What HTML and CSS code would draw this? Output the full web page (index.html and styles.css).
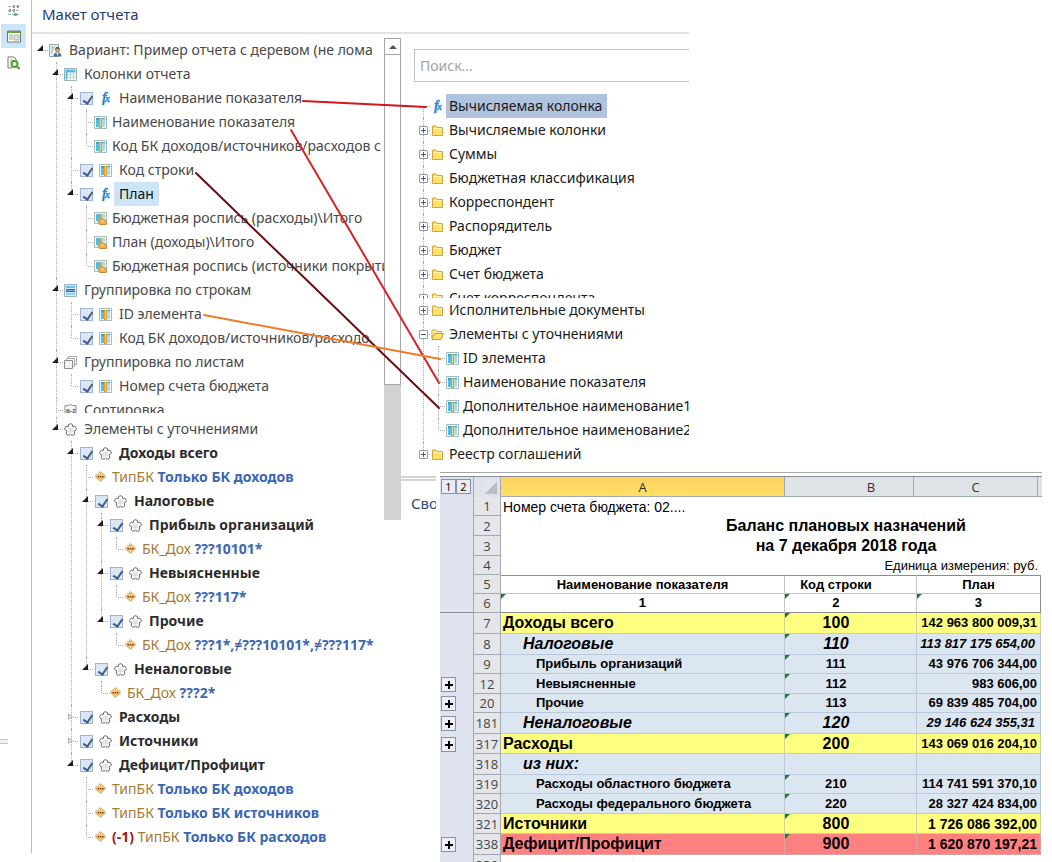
FILE: index.html
```html
<!DOCTYPE html>
<html lang="ru">
<head>
<meta charset="utf-8">
<title>Макет отчета</title>
<link rel="stylesheet" href="styles.css">
</head>
<body>
<svg class="defs" aria-hidden="true">
  <symbol id="star" viewBox="0 0 13 13"><path d="M6.500.700L8.400 1.500 8.600 3.500 11 3.300 12.400 5.200 12 6.900 10.200 7.800 10.800 10 10 11.800 8 12.300 6.500 11 5 12.300 3 11.800 2.200 10 2.800 7.800 1 6.900.600 5.200 2 3.300 4.400 3.500 4.600 1.500z" fill="#fff" stroke="#6c6c6c" stroke-linejoin="round"/><path d="M4 4.500h5v5H4z" fill="#e2e2e2"/></symbol>
  <symbol id="col" viewBox="0 0 13 13"><path d="M.5.5h12v12H.5z" fill="#f3f8f9" stroke="#a9b9be"/><path d="M2 2h3v9H2z" fill="#4dbfe6"/><path d="M8 2h3v9H8z" fill="#a9dcef"/><path d="M2 2h3v2H2zM8 2h3v1H8z" fill="#2fa6d6"/><path d="M5 2h3v10H5z" fill="#f09a2c"/><path d="M6 3h1v8H6z" fill="#ffcf74"/></symbol>
  <symbol id="sum" viewBox="0 0 13 13"><path d="M.5.5h12v11H.5z" fill="#f3f8f9" stroke="#a9b9be"/><path d="M2 2h3v7H2z" fill="#4dbfe6"/><path d="M8 2h3v4H8z" fill="#a9dcef"/><path d="M5 2h3v6H5z" fill="#f09a2c"/><path d="M4 9.500l2-2.500h4l2.500 2v3.500H5.500z" fill="#e6b05c" stroke="#c48c3a"/><path d="M7 9h3" stroke="#fbdc9c"/></symbol>
  <symbol id="cols" viewBox="0 0 13 13"><path d="M.5.500h12v12H.5z" fill="#fff" stroke="#9eb0b7"/><path d="M1.500 1.500h10v3h-10zM1.500 4.500h2v7h-2z" fill="#4dbbe6"/><path d="M4 7h8M4 9.500h8M6.500 4v8M9.500 4v8" stroke="#bcd3dc" fill="none"/></symbol>
  <symbol id="rows" viewBox="0 0 13 13"><path d="M.5.500h12v12H.5z" fill="#cdeefa" stroke="#9eb0b7"/><path d="M2 2h9v2H2z" fill="#62c3ea"/><path d="M2 5h9v3H2z" fill="#2f63c4"/><path d="M2 6h9v1H2z" fill="#7fa4e2"/><path d="M2 9h9v2H2z" fill="#8bd5f1"/></symbol>
  <symbol id="pages" viewBox="0 0 13 13"><path d="M4.500.500h8v8h-8z" fill="#fff" stroke="#a6a6a6"/><path d="M2.500 2.500h8v8h-8z" fill="#fff" stroke="#a6a6a6"/><path d="M.5 4.500h8v8h-8z" fill="#f1f1f1" stroke="#8e8e8e"/></symbol>
  <symbol id="variant" viewBox="0 0 13 13"><path d="M.500.500h9v12h-9z" fill="#eef3f3" stroke="#97a5a8"/><path d="M2 3h4M2 5h3M2 7h2M2 9h2" stroke="#7fb5c4" fill="none"/><path d="M4.500 12.500c0-3 1.500-4 4-4s4 1 4 4z" fill="#4a6f92"/><path d="M7.500 9h2l-1 3z" fill="#fff"/><circle cx="8.500" cy="6" r="2.500" fill="#d99a5a"/><path d="M6 5.500c.2-3.500 4.800-3.500 5 0l-1.500-1h-2z" fill="#43352c"/></symbol>
  <symbol id="cond" viewBox="0 0 13 13"><path d="M6.500.500l5.500 5-5.500 5-5.500-5z" fill="#f0c27c" stroke="#e0b06a" stroke-linejoin="round"/><path d="M3.500 5h1.500v1.500H3.500zM5.800 5h1.500v1.500H5.800zM8.100 5h1.500v1.500H8.100z" fill="#6d4a1b"/></symbol>
  <symbol id="folder" viewBox="0 0 13 13"><path d="M1.500 2v9.500h10V3.500H6L5 2z" fill="#ffe168" stroke="#cfa63c" stroke-linejoin="round"/><path d="M2 4.500h9" stroke="#fff3ae"/></symbol>
  <symbol id="folder-open" viewBox="0 0 13 13"><path d="M1 11V2h4l1 1.500h4.500V6" fill="#fff3b8" stroke="#cfa63c"/><path d="M1 11.500L3.500 5.500h9l-2.500 6z" fill="#ffe168" stroke="#c99f33" stroke-linejoin="round"/></symbol>
</svg>

<div class="app">
  <nav class="rail" aria-label="Разделы">
    <button class="rail-btn" aria-label="Параметры"><svg width="13" height="13" viewBox="0 0 13 13"><path d="M1 2.500h11M1 6.500h11M1 10.500h11" stroke="#a9b3b6" stroke-dasharray="3 1"/><path d="M6 1h2v3H6zM10 1h2v3h-2z" fill="#e2817c"/><path d="M2 5h2v3H2zM6 5h2v3H6z" fill="#7aa3d8"/><path d="M7 9h3v3H7z" fill="#7cad69"/></svg></button>
    <button class="rail-btn active" aria-label="Макет"><svg width="14" height="13" viewBox="0 0 14 13"><path d="M.5 1h13v11H.5z" fill="#fff" stroke="#667e6c"/><path d="M0 1h14v2H0z" fill="#6d9e38"/><path d="M2 5h4M2 7h4M2 9h4" stroke="#92a6a6"/><path d="M7 5h5v5H7z" fill="#dedede" stroke="#b5b5b5"/></svg></button>
    <button class="rail-btn" aria-label="Просмотр"><svg width="13" height="14" viewBox="0 0 13 14"><path d="M1 1h6l2 2v2M1 1v11h4" fill="none" stroke="#777"/><path d="M3 4h3M3 6h2" stroke="#aaa"/><circle cx="7.500" cy="8" r="3" fill="#e8f5df" stroke="#5c9a2c" stroke-width="2"/><path d="M9.500 10l3 3" stroke="#5c9a2c" stroke-width="2"/></svg></button>
    <span class="grip"></span>
  </nav>

  <main class="work">
    <h1 class="title">Макет отчета</h1>
    <div class="panes">
      <section class="layout-pane" aria-label="Дерево отчета">
        <ul class="tree">
          <li><div class="row"><button class="tg" aria-label="Свернуть"></button><svg class="ic"><use href="#variant"/></svg><span class="txt">Вариант: Пример отчета с деревом (не лома</span></div>
            <ul>
              <li><div class="row"><button class="tg" aria-label="Свернуть"></button><svg class="ic"><use href="#cols"/></svg><span class="txt">Колонки отчета</span></div>
                <ul>
                  <li><div class="row"><button class="tg" aria-label="Свернуть"></button><input type="checkbox" id="c1" checked><svg class="ic fx" viewBox="0 0 13 13"><text x="3" y="10">f</text><text x="6" y="10" class="fx-x">x</text></svg><label class="txt" for="c1">Наименование показателя</label></div>
                    <ul>
                      <li><div class="row leaf"><svg class="ic"><use href="#col"/></svg><span class="txt">Наименование показателя</span></div></li>
                      <li><div class="row leaf"><svg class="ic"><use href="#col"/></svg><span class="txt">Код БК доходов/источников/расходов с</span></div></li>
                    </ul></li>
                  <li><div class="row leaf"><input type="checkbox" id="c2" checked><svg class="ic"><use href="#col"/></svg><label class="txt far" for="c2">Код строки</label></div></li>
                  <li><div class="row"><button class="tg" aria-label="Свернуть"></button><input type="checkbox" id="c3" checked><svg class="ic fx" viewBox="0 0 13 13"><text x="3" y="10">f</text><text x="6" y="10" class="fx-x">x</text></svg><label class="txt selected" for="c3">План</label></div>
                    <ul>
                      <li><div class="row leaf"><svg class="ic"><use href="#sum"/></svg><span class="txt">Бюджетная роспись (расходы)\Итого</span></div></li>
                      <li><div class="row leaf"><svg class="ic"><use href="#sum"/></svg><span class="txt">План (доходы)\Итого</span></div></li>
                      <li><div class="row leaf"><svg class="ic"><use href="#sum"/></svg><span class="txt">Бюджетная роспись (источники покрыти</span></div></li>
                    </ul></li>
                </ul></li>
              <li><div class="row"><button class="tg" aria-label="Свернуть"></button><svg class="ic"><use href="#rows"/></svg><span class="txt">Группировка по строкам</span></div>
                <ul>
                  <li><div class="row leaf"><input type="checkbox" id="c4" checked><svg class="ic"><use href="#col"/></svg><label class="txt far" for="c4">ID элемента</label></div></li>
                  <li><div class="row leaf"><input type="checkbox" id="c5" checked><svg class="ic"><use href="#col"/></svg><label class="txt far" for="c5">Код БК доходов/источников/расходо</label></div></li>
                </ul></li>
              <li><div class="row"><button class="tg" aria-label="Свернуть"></button><svg class="ic"><use href="#pages"/></svg><span class="txt">Группировка по листам</span></div>
                <ul>
                  <li><div class="row leaf"><input type="checkbox" id="c6" checked><svg class="ic"><use href="#col"/></svg><label class="txt far" for="c6">Номер счета бюджета</label></div></li>
                </ul></li>
              <li class="cut"><div class="row leaf"><svg class="ic" viewBox="0 0 13 13"><path d="M1 1.500h3.500l2-1 2 1H12v11H1z" fill="#f7f7f7" stroke="#8e8e8e"/><text class="az" x="2" y="9">a-z</text></svg><span class="txt far">Сортировка</span></div></li>
              <li><div class="row"><button class="tg" aria-label="Свернуть"></button><svg class="ic"><use href="#star"/></svg><span class="txt">Элементы с уточнениями</span></div>
                <ul>
                  <li><div class="row"><button class="tg" aria-label="Свернуть"></button><input type="checkbox" id="c7" checked><svg class="ic"><use href="#star"/></svg><label class="txt strong" for="c7">Доходы всего</label></div>
                    <ul>
                      <li><div class="row leaf"><svg class="ic"><use href="#cond"/></svg><span class="txt"><span class="field">ТипБК</span> <b>Только БК доходов</b></span></div></li>
                      <li><div class="row"><button class="tg" aria-label="Свернуть"></button><input type="checkbox" id="c8" checked><svg class="ic"><use href="#star"/></svg><label class="txt strong" for="c8">Налоговые</label></div>
                        <ul>
                          <li><div class="row"><button class="tg" aria-label="Свернуть"></button><input type="checkbox" id="c9" checked><svg class="ic"><use href="#star"/></svg><label class="txt strong" for="c9">Прибыль организаций</label></div>
                            <ul><li><div class="row leaf"><svg class="ic"><use href="#cond"/></svg><span class="txt"><span class="field">БК_Дох</span> <b>???10101*</b></span></div></li></ul></li>
                          <li><div class="row"><button class="tg" aria-label="Свернуть"></button><input type="checkbox" id="c10" checked><svg class="ic"><use href="#star"/></svg><label class="txt strong" for="c10">Невыясненные</label></div>
                            <ul><li><div class="row leaf"><svg class="ic"><use href="#cond"/></svg><span class="txt"><span class="field">БК_Дох</span> <b>???117*</b></span></div></li></ul></li>
                          <li><div class="row"><button class="tg" aria-label="Свернуть"></button><input type="checkbox" id="c11" checked><svg class="ic"><use href="#star"/></svg><label class="txt strong" for="c11">Прочие</label></div>
                            <ul><li><div class="row leaf"><svg class="ic"><use href="#cond"/></svg><span class="txt"><span class="field">БК_Дох</span> <b>???1*,≠???10101*,≠???117*</b></span></div></li></ul></li>
                        </ul></li>
                      <li><div class="row"><button class="tg" aria-label="Свернуть"></button><input type="checkbox" id="c12" checked><svg class="ic"><use href="#star"/></svg><label class="txt strong" for="c12">Неналоговые</label></div>
                        <ul><li><div class="row leaf"><svg class="ic"><use href="#cond"/></svg><span class="txt"><span class="field">БК_Дох</span> <b>???2*</b></span></div></li></ul></li>
                    </ul></li>
                  <li><div class="row"><button class="tg closed" aria-label="Развернуть"></button><input type="checkbox" id="c13" checked><svg class="ic"><use href="#star"/></svg><label class="txt strong" for="c13">Расходы</label></div></li>
                  <li><div class="row"><button class="tg closed" aria-label="Развернуть"></button><input type="checkbox" id="c14" checked><svg class="ic"><use href="#star"/></svg><label class="txt strong" for="c14">Источники</label></div></li>
                  <li><div class="row"><button class="tg" aria-label="Свернуть"></button><input type="checkbox" id="c15" checked><svg class="ic"><use href="#star"/></svg><label class="txt strong" for="c15">Дефицит/Профицит</label></div>
                    <ul>
                      <li><div class="row leaf"><svg class="ic"><use href="#cond"/></svg><span class="txt"><span class="field">ТипБК</span> <b>Только БК доходов</b></span></div></li>
                      <li><div class="row leaf"><svg class="ic"><use href="#cond"/></svg><span class="txt"><span class="field">ТипБК</span> <b>Только БК источников</b></span></div></li>
                      <li><div class="row leaf"><svg class="ic"><use href="#cond"/></svg><span class="txt"><b class="neg">(-1)</b> <span class="field">ТипБК</span> <b>Только БК расходов</b></span></div></li>
                    </ul></li>
                </ul></li>
            </ul></li>
        </ul>
      </section>

      <div class="scroll"><button class="up" aria-label="Вверх"></button><div class="thumb"></div><div class="track"></div></div>

      <section class="fields-pane" aria-label="Доступные поля">
        <div class="fields">
          <input class="search" type="search" placeholder="Поиск..." aria-label="Поиск">
          <ul class="tree fields-tree">
            <li><div class="row leaf"><svg class="ic fx" viewBox="0 0 13 13"><text x="3" y="10">f</text><text x="6" y="10" class="fx-x">x</text></svg><span class="txt picked">Вычисляемая колонка</span></div></li>
            <li><div class="row"><button class="pm" aria-label="Развернуть"></button><svg class="ic"><use href="#folder"/></svg><span class="txt">Вычисляемые колонки</span></div></li>
            <li><div class="row"><button class="pm" aria-label="Развернуть"></button><svg class="ic"><use href="#folder"/></svg><span class="txt">Суммы</span></div></li>
            <li><div class="row"><button class="pm" aria-label="Развернуть"></button><svg class="ic"><use href="#folder"/></svg><span class="txt">Бюджетная классификация</span></div></li>
            <li><div class="row"><button class="pm" aria-label="Развернуть"></button><svg class="ic"><use href="#folder"/></svg><span class="txt">Корреспондент</span></div></li>
            <li><div class="row"><button class="pm" aria-label="Развернуть"></button><svg class="ic"><use href="#folder"/></svg><span class="txt">Распорядитель</span></div></li>
            <li><div class="row"><button class="pm" aria-label="Развернуть"></button><svg class="ic"><use href="#folder"/></svg><span class="txt">Бюджет</span></div></li>
            <li><div class="row"><button class="pm" aria-label="Развернуть"></button><svg class="ic"><use href="#folder"/></svg><span class="txt">Счет бюджета</span></div></li>
            <li class="cut"><div class="row"><button class="pm" aria-label="Развернуть"></button><svg class="ic"><use href="#folder"/></svg><span class="txt">Счет корреспондента</span></div></li>
            <li><div class="row"><button class="pm" aria-label="Развернуть"></button><svg class="ic"><use href="#folder"/></svg><span class="txt">Исполнительные документы</span></div></li>
            <li><div class="row"><button class="pm open" aria-label="Свернуть"></button><svg class="ic"><use href="#folder-open"/></svg><span class="txt">Элементы с уточнениями</span></div>
              <ul>
                <li><div class="row leaf"><svg class="ic"><use href="#col"/></svg><span class="txt">ID элемента</span></div></li>
                <li><div class="row leaf"><svg class="ic"><use href="#col"/></svg><span class="txt">Наименование показателя</span></div></li>
                <li><div class="row leaf"><svg class="ic"><use href="#col"/></svg><span class="txt">Дополнительное наименование1</span></div></li>
                <li><div class="row leaf"><svg class="ic"><use href="#col"/></svg><span class="txt">Дополнительное наименование2</span></div></li>
              </ul></li>
            <li><div class="row"><button class="pm" aria-label="Развернуть"></button><svg class="ic"><use href="#folder"/></svg><span class="txt">Реестр соглашений</span></div></li>
          </ul>
        </div>
        <h2 class="props">Сво</h2>
      </section>
    </div>
  </main>

  <section class="sheet" aria-label="Баланс плановых назначений">
    <div class="colheads">
      <div class="levels"><button>1</button><button>2</button></div>
      <div class="corner"></div>
      <div class="ch ch-a">A</div>
      <div class="ch ch-b">B</div>
      <div class="ch ch-c">C</div>
      <div class="ch ch-rest"></div>
    </div>
    <table class="grid">
      <colgroup><col class="w-out"><col class="w-num"><col><col class="w-b"><col class="w-c"></colgroup>
      <tbody class="top">
        <tr class="s"><td class="out"></td><th>1</th><td class="plain" colspan="3">Номер счета бюджета: 02....</td></tr>
        <tr class="m"><td class="out"></td><th>2</th><td class="head" colspan="3">Баланс плановых назначений</td></tr>
        <tr class="m"><td class="out"></td><th>3</th><td class="head" colspan="3">на 7 декабря 2018 года</td></tr>
        <tr class="s"><td class="out"></td><th>4</th><td class="plain unit" colspan="3">Единица измерения: руб.</td></tr>
        <tr class="s caps first"><td class="out"></td><th>5</th><td>Наименование показателя</td><td class="code">Код строки</td><td>План</td></tr>
        <tr class="s caps last"><td class="out"></td><th>6</th><td class="mark">1</td><td class="code mark">2</td><td class="mark">3</td></tr>
      </tbody>
      <tbody class="data">
        <tr class="l total"><td class="out"></td><th>7</th><td>Доходы всего</td><td class="code mark">100</td><td class="num">142 963 800 009,31</td></tr>
        <tr class="l group"><td class="out"></td><th>8</th><td>Налоговые</td><td class="code mark">110</td><td class="num">113 817 175 654,00</td></tr>
        <tr class="s item"><td class="out"></td><th>9</th><td>Прибыль организаций</td><td class="code mark">111</td><td class="num">43 976 706 344,00</td></tr>
        <tr class="m item"><td class="out"><button class="plus" aria-label="Показать строки"></button></td><th>12</th><td>Невыясненные</td><td class="code mark">112</td><td class="num">983 606,00</td></tr>
        <tr class="s item"><td class="out"><button class="plus" aria-label="Показать строки"></button></td><th>20</th><td>Прочие</td><td class="code mark">113</td><td class="num">69 839 485 704,00</td></tr>
        <tr class="l group"><td class="out"><button class="plus" aria-label="Показать строки"></button></td><th>181</th><td>Неналоговые</td><td class="code mark">120</td><td class="num">29 146 624 355,31</td></tr>
        <tr class="m total"><td class="out"><button class="plus" aria-label="Показать строки"></button></td><th>317</th><td>Расходы</td><td class="code mark">200</td><td class="num">143 069 016 204,10</td></tr>
        <tr class="l group"><td class="out"></td><th>318</th><td>из них:</td><td class="code"></td><td class="num"></td></tr>
        <tr class="s item"><td class="out"></td><th>319</th><td>Расходы областного бюджета</td><td class="code mark">210</td><td class="num">114 741 591 370,10</td></tr>
        <tr class="m item"><td class="out"></td><th>320</th><td>Расходы федерального бюджета</td><td class="code mark">220</td><td class="num">28 327 424 834,00</td></tr>
        <tr class="m total big"><td class="out"></td><th>321</th><td>Источники</td><td class="code mark">800</td><td class="num">1 726 086 392,00</td></tr>
        <tr class="l total big deficit"><td class="out"><button class="plus" aria-label="Показать строки"></button></td><th>338</th><td>Дефицит/Профицит</td><td class="code mark">900</td><td class="num">1 620 870 197,21</td></tr>
        <tr class="m after"><td class="out"></td><th>339</th><td></td><td></td><td></td></tr>
      </tbody>
    </table>
  </section>

  <svg class="links" width="700" height="480" aria-hidden="true">
    <g fill="none" stroke-width="2" stroke-linecap="round">
      <path d="M303 101L426 107" stroke="#d0181d"/>
      <path d="M291 130L439 383" stroke="#da2127"/>
      <path d="M196 173L439 408" stroke="#6c0b12"/>
      <path d="M204 315L440 359" stroke="#f07c2a"/>
    </g>
  </svg>
</div>
</body>
</html>
```
FILE: styles.css
```css
* { box-sizing: border-box; }
body { margin: 0; background: #fff; color: #484848; font: 14px/24px "Noto Sans", "Open Sans", sans-serif; }
button { padding: 0; border: 0; background: none; font: inherit; }
ul { list-style: none; margin: 0; padding: 0; }
.defs { position: absolute; width: 0; height: 0; }

.app { position: relative; display: flex; height: 100vh; overflow: hidden; }

/* left rail */
.rail { flex: none; width: 32px; border-right: 1px solid #bdbdbd; margin-bottom: 9px; display: flex; flex-direction: column; gap: 4px; padding-left: 1px; }
.rail-btn { width: 25px; height: 20px; display: flex; align-items: center; justify-content: center; }
.rail-btn.active { height: 24px; background: #cde6f7; }
.rail-btn:nth-child(3) { height: 22px; }
.grip { width: 8px; height: 5px; margin: auto 0 109px -1px; border: solid #c4c4c4; border-width: 1px 0; background: #f0f0f0; }

/* designer */
.work { flex: 1; max-width: 657px; min-width: 0; display: flex; flex-direction: column; }
.title { margin: 0; padding: 0 10px 5px; height: 34px; font-size: 15px; line-height: 28px; font-weight: 400; color: #1f3b73; border-bottom: 2px solid #e2e2e2; }
.panes { flex: 1; min-height: 0; display: flex; }
.layout-pane { flex: 1; min-width: 0; padding: 4px 0 0 4px; overflow: hidden; }

/* tree */
.tree ul { padding-left: 15px; }
.tree li { position: relative; }
.tree li::before { content: ""; position: absolute; left: 5px; top: 0; bottom: 0; border-left: 1px dotted #a8a8a8; }
.tree li:last-child::before { bottom: auto; height: 12px; }
.layout-pane .tree > li::before { display: none; }
.row { position: relative; display: flex; align-items: center; height: 24px; padding-left: 13px; white-space: nowrap; }
.row::before { content: ""; position: absolute; left: 7px; top: 12px; width: 5px; border-top: 1px dotted #a8a8a8; }
.cut { overflow: hidden; height: 15px; margin-bottom: 4px; }
.ic { flex: none; width: 13px; height: 13px; }
.fx { overflow: visible; fill: #2b86c9; stroke: #2b86c9; stroke-width: 0.3; font: italic 700 14px/1 "Liberation Serif", serif; }
.fx-x { font-size: 10px; }
.az { fill: #666; font: 700 7px/1 "Liberation Sans", sans-serif; }
.txt { margin-left: 7px; }
.leaf .txt { margin-left: 5px; }
.leaf .far { margin-left: 7px; }
.row input + .ic { margin-left: 5px; }
.tg, .pm { position: absolute; left: 0; top: 6px; width: 11px; height: 11px; }
.tg::before { content: ""; position: absolute; left: 1px; top: 1px; border-left: 6px solid transparent; border-bottom: 6px solid #1e1e1e; }
.tg.closed::before { left: 2px; top: 2px; width: 5px; height: 7px; border: 0; background: #b0b0b0; clip-path: polygon(0 0, 100% 50%, 0 100%); }
.tg.closed::after { content: ""; position: absolute; left: 3px; top: 4px; width: 2px; height: 3px; background: #fff; clip-path: polygon(0 0, 100% 50%, 0 100%); }
.row input { appearance: none; position: relative; flex: none; width: 13px; height: 13px; margin: 0 0 0 1px; border: 1px solid #9db3d0; background: #dce7f5; }
.row input + .ic { margin-left: 6px; }
.row input:checked::after { content: ""; position: absolute; left: 4px; top: 1px; width: 4px; height: 8px; border: solid #3f5b8a; border-width: 0 2px 2px 0; transform: rotate(35deg); }
.strong { font-weight: 700; color: #2c2c2c; }
.field { color: #a37b35; }
.txt b { color: #3a66b2; }
.txt .neg { color: #a01515; }
.row .selected { margin-left: 2px; padding: 0 5px; background: #cbe5f7; color: #111; }

/* scrollbar */
.scroll { flex: none; width: 17px; height: 486px; padding-top: 4px; display: flex; flex-direction: column; }
.up { flex: none; height: 17px; border: 1px solid #a6a6a6; display: flex; align-items: center; justify-content: center; }
.up::before { content: ""; border: solid transparent; border-width: 0 4px 4px; border-bottom-color: #555; }
.thumb { flex: none; height: 330px; border: solid #a6a6a6; border-width: 0 1px 1px; background: #fff; }
.track { flex: 1; background: #d2d2d2; }

/* available fields */
.fields-pane { flex: none; width: 288px; }
.fields { height: 438px; padding: 15px 0 0 13px; overflow: hidden; }
.search { display: block; width: 100%; height: 33px; padding: 0 5px; border: 1px solid #bcbcbc; border-right: 0; border-radius: 0; outline: 0; appearance: none; background: #fff; font: inherit; }
.search::placeholder { color: #a3a3a3; opacity: 1; }
.fields-tree { margin: 12px 0 0 4px; color: #1a1a1a; }
.fields-tree .cut { height: 12px; margin: 0; }
.fields-tree > li:first-child::before { top: 12px; }
.fields-tree .txt { margin-left: 5px; }
.fields-tree .leaf .txt { margin-left: 4px; }
.fields-tree .leaf .picked { margin-left: 2px; padding: 0 5px 0 3px; background: #afc3de; }
.pm { left: 1px; top: 8px; width: 9px; height: 9px; border: 1px solid #9a9a9a; border-radius: 1px; background: #fff; }
.pm::before, .pm::after { content: ""; position: absolute; background: #445a8a; }
.pm::before { left: 1px; top: 3px; width: 5px; height: 1px; }
.pm::after { left: 3px; top: 1px; width: 1px; height: 5px; }
.pm.open::after { display: none; }
.props { margin: 4px 0 0; width: 35px; padding: 10px 0 0 10px; border-top: 5px double #d4d4d4; font-size: 15px; line-height: 24px; font-weight: 400; color: #2f4a85; overflow: hidden; }

/* spreadsheet over the designer */
.sheet { position: absolute; left: 440px; right: 10px; top: 472px; bottom: 0; overflow: hidden; background: #fff; border-top: 1px solid #a8a8a8; padding-top: 3px; color: #000; font-family: "Liberation Sans", Arial, sans-serif; }
.colheads { display: flex; height: 21px; border-top: 1px solid #8c8f94; background: #dfe2e7; font: 13px/20px "Open Sans", sans-serif; color: #333; text-align: center; }
.levels { flex: none; width: 33px; padding: 2px 1px 0; display: flex; align-items: flex-start; background: #dce1ef; }
.levels button { width: 15px; height: 15px; border: 1px solid #8a92a6; background: #e9ecf5; font: 11px/13px "Open Sans", sans-serif; }
.corner { flex: none; width: 28px; border: solid #a3a9b2; border-width: 0 1px; background: linear-gradient(135deg, #e3e6ea 50%, #b9bdc4 50%) content-box #e3e6ea; padding: 4px 3px 3px 11px; }
.ch { border: solid #a3a9b2; border-width: 0 1px 1px 0; }
.ch-a { flex: 1; background: linear-gradient(#ffd263, #ffe066); }
.ch-b { flex: none; width: 129px; padding-left: 44px; }
.ch-c { flex: none; width: 124px; }
.ch-rest { flex: none; width: 4px; border-right: 0; }

.grid { width: 100%; border-collapse: separate; border-spacing: 0; table-layout: fixed; border-right: 1px solid #fff; line-height: 16px; }
.w-out { width: 33px; }
.w-num { width: 28px; }
.w-b { width: 132px; }
.w-c { width: 124px; }
.grid td, .grid th { padding: 0; overflow: hidden; white-space: nowrap; }
.s { height: 19px; }
.m { height: 20px; }
.l { height: 21px; }
.grid th { background: #e4e6ea; border: solid #a3a9b2; border-width: 0 1px 1px; font: 13px/16px "Open Sans", sans-serif; color: #444; }
.grid .out { background: #dfe3f0; text-align: left; padding-left: 1px; }
.grid .plain { font-size: 14px; padding-left: 2px; }
.grid .unit { font-size: 13px; text-align: right; padding-right: 3px; }
.grid .head { font-size: 16px; font-weight: 700; text-align: center; padding-left: 150px; }
.caps td { font-size: 13px; font-weight: 700; text-align: center; border: solid #c6c6c6; border-width: 0 1px 1px 0; }
.caps .out, .data .out { border: 0; }
.first td:not(.out) { border-top: 1px solid #8c8c8c; }
.last td, .last .out { border-bottom: 1px solid #8c8c8c; }
.caps td:last-child { border-right-color: #8c8c8c; }
.grid .code { text-align: center; padding-right: 29px; }
.mark { position: relative; }
.mark::before { content: ""; position: absolute; left: 0; top: 0; border-top: 5px solid #1e7a2c; border-right: 5px solid transparent; }
.data td { background: #dce6f1; border: solid #b9c8da; border-width: 0 1px 1px 0; font-size: 13px; font-weight: 700; }
.data .num { text-align: right; padding-right: 3px; }
.item td:nth-child(3) { padding-left: 35px; }
.group td { font-size: 16px; font-style: italic; }
.group td:nth-child(3) { padding-left: 22px; }
.group .num { font-size: 13px; padding-right: 5px; }
.total td { background: #ffff80; border-color: #cdd19a; font-size: 16px; }
.total td:nth-child(3) { padding-left: 2px; }
.total .num { font-size: 13px; }
.big .num { font-size: 14px; }
.deficit td { background: #ff8080; border-color: #d9a3a3; }
.after td { background: #fff; border: 0; }
.plus { position: relative; display: block; width: 15px; height: 15px; border: 1px solid #8a92a6; background: #eceff7; }
.plus::before, .plus::after { content: ""; position: absolute; background: #000; }
.plus::before { left: 3px; top: 6px; width: 8px; height: 2px; }
.plus::after { left: 6px; top: 3px; width: 2px; height: 8px; }

/* mapping arrows between the two trees */
.links { position: absolute; left: 0; top: 0; pointer-events: none; }
```
